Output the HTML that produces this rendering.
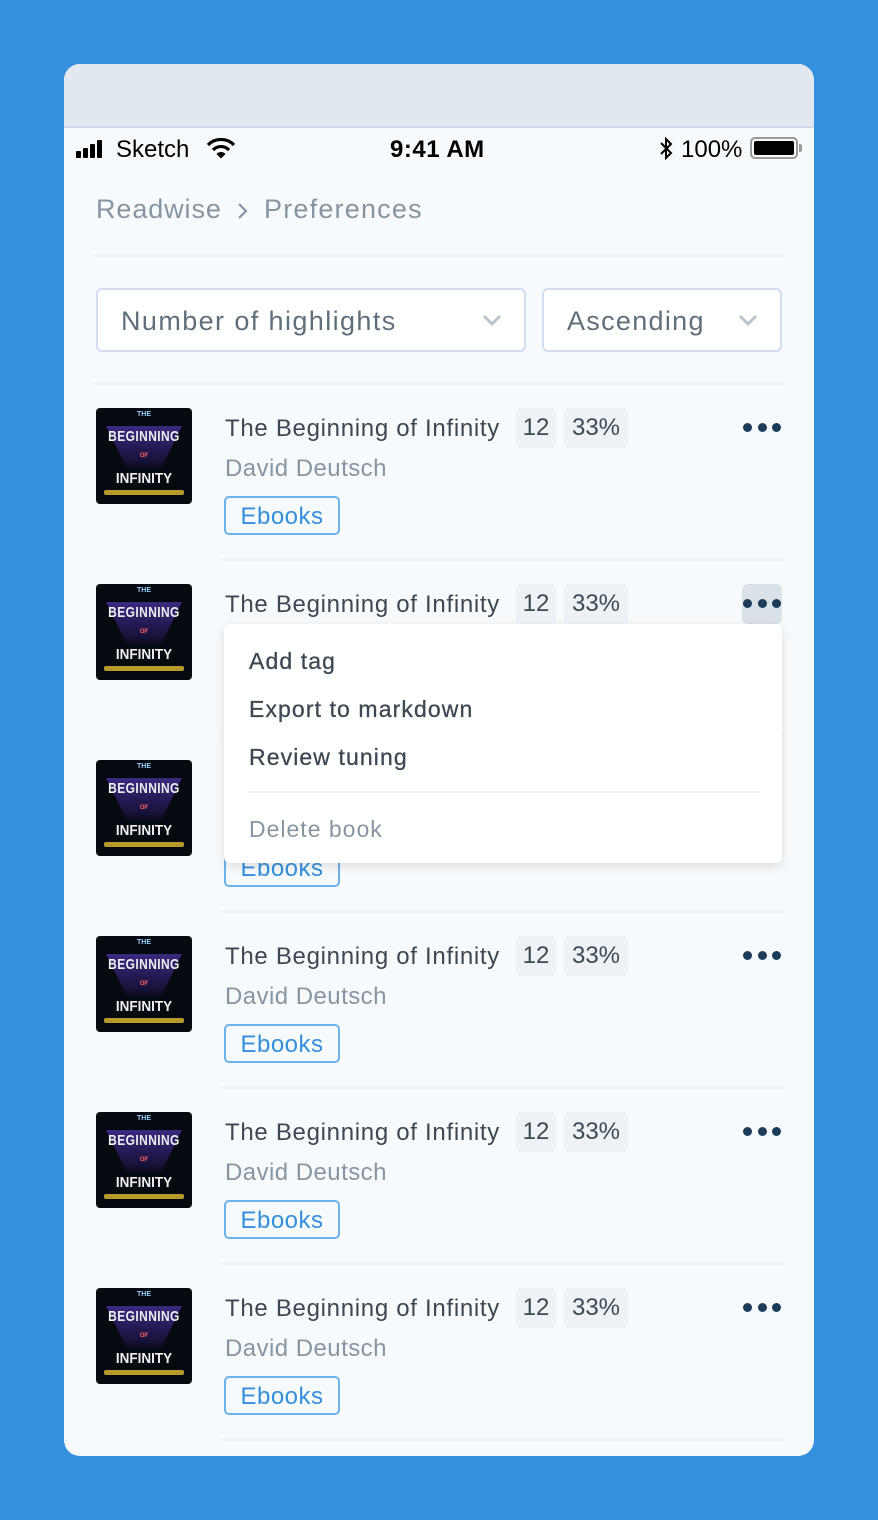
<!DOCTYPE html>
<html><head><meta charset="utf-8"><style>
*{margin:0;padding:0;box-sizing:border-box}
body{width:878px;height:1520px;background:#3490dc;font-family:"Liberation Sans",sans-serif;position:relative;overflow:hidden}
.card{position:absolute;left:64px;top:64px;width:750px;height:1392px;background:#f7fafc;border-radius:16px;overflow:hidden}
.hdr{position:absolute;left:0;top:0;width:750px;height:64px;background:#e2e8f0;border-bottom:2px solid #cfd8e3}
.a{position:absolute;white-space:nowrap}
.hr{position:absolute;height:3px;background:#edf2f7}
.sel{position:absolute;top:224px;height:64px;border:2px solid #d6dcf0;border-radius:6px;background:#fff;font-size:27px;color:#606f7b;padding-left:23px;line-height:62px;letter-spacing:.6px}
.chev{position:absolute;top:22px;width:20px;height:16px}
.cover{position:absolute;left:32px;width:96px;height:96px;background:#050a10;border-radius:4px;overflow:hidden;text-align:center;color:#eee;font-weight:bold}
.cover .g{position:absolute;left:10px;right:10px;top:18px;height:46px;background:linear-gradient(#3a2a80,#1b1440 70%,#050a10);clip-path:polygon(0 0,100% 0,70% 100%,30% 100%)}
.cover .t1{position:absolute;top:3px;width:100%;font-size:7px;color:#9cf}
.cover .t2{position:absolute;top:20px;width:100%;font-size:15px;letter-spacing:0.5px;transform:scaleX(.8)}
.cover .t3{position:absolute;top:45px;width:100%;font-size:6px;color:#f66}
.cover .t4{position:absolute;top:62px;width:100%;font-size:15px;transform:scaleX(.9)}
.cover .y{position:absolute;left:8px;right:8px;top:82px;height:5px;background:#b89a2a;border-radius:2px}
.title{font-size:24px;color:#3d4852;letter-spacing:.7px}
.auth{font-size:24px;color:#8795a1;letter-spacing:.45px}
.badge{position:absolute;height:40px;background:#edf2f7;border-radius:6px;font-size:24px;color:#3d4852;line-height:40px;text-align:center}
.tag{position:absolute;left:160px;width:116px;height:39px;border:2px solid #6cb2eb;border-radius:5px;font-size:24px;color:#3490dc;line-height:37px;text-align:center;letter-spacing:.5px}
.dots{position:absolute;left:678px;width:40px;height:40px;border-radius:6px}
.dots i{position:absolute;top:15px;width:9px;height:9px;border-radius:50%;background:#1c3d5a}
.menu{position:absolute;left:160px;top:560px;width:558px;height:239px;background:#fff;border-radius:6px;box-shadow:0 3px 10px rgba(0,0,0,.12);z-index:5}
.mi{position:absolute;left:25px;font-size:23px;color:#3d4852;letter-spacing:1.1px;-webkit-text-stroke:.3px #3d4852}
</style></head><body>
<div class="card">
<div class="hdr"></div>
<svg class="a" style="left:12px;top:75px" width="34" height="20"><rect x="0" y="12" width="5" height="7" rx="1"/><rect x="7" y="9" width="5" height="10" rx="1"/><rect x="14" y="5" width="5" height="14" rx="1"/><rect x="21" y="1" width="5" height="18" rx="1"/></svg>
<div class="a" style="left:52px;top:72px;font-size:24px;color:#000">Sketch</div>
<svg class="a" style="left:142px;top:73px" width="30" height="22" viewBox="0 0 30 22"><path d="M2 8 A18 18 0 0 1 28 8" stroke="#000" stroke-width="3.2" fill="none"/><path d="M7 13 A11 11 0 0 1 23 13" stroke="#000" stroke-width="3.2" fill="none"/><path d="M10.5 17 L15 21.5 L19.5 17 A6 6 0 0 0 10.5 17Z"/></svg>
<div class="a" style="left:326px;top:72px;font-size:24px;color:#000;font-weight:bold;letter-spacing:.5px">9:41 AM</div>
<svg class="a" style="left:594px;top:72px" width="16" height="26" viewBox="0 0 16 26"><path d="M3 7 L13 17 L8 22 L8 3 L13 8 L3 18" stroke="#000" stroke-width="2" fill="none"/></svg>
<div class="a" style="left:617px;top:72px;font-size:24px;color:#000">100%</div>
<div class="a" style="left:686px;top:73px;width:48px;height:22px;border:2px solid #999;border-radius:5px;padding:2px"><div style="width:100%;height:100%;background:#000;border-radius:2px"></div></div>
<div class="a" style="left:735px;top:80px;width:3px;height:8px;background:#999;border-radius:0 2px 2px 0"></div>
<div class="a" style="left:32px;top:130px;font-size:27px;color:#8795a1;letter-spacing:.9px">Readwise</div>
<svg class="a" style="left:172px;top:137px" width="14" height="20"><path d="M3 3 L10 10 L3 17" stroke="#8795a1" stroke-width="2.2" fill="none"/></svg>
<div class="a" style="left:200px;top:130px;font-size:27px;color:#8795a1;letter-spacing:1.2px">Preferences</div>
<div class="hr" style="left:30px;top:190px;width:690px"></div>
<div class="sel" style="left:32px;width:430px;letter-spacing:1.4px">Number of highlights<svg class="chev" style="left:384px" viewBox="0 0 20 16"><path d="M2 4 L10 12 L18 4" stroke="#b8c2cc" stroke-width="2.8" fill="none"/></svg></div>
<div class="sel" style="left:478px;width:240px;letter-spacing:1.3px">Ascending<svg class="chev" style="left:194px" viewBox="0 0 20 16"><path d="M2 4 L10 12 L18 4" stroke="#b8c2cc" stroke-width="2.8" fill="none"/></svg></div>
<div class="hr" style="left:30px;top:318px;width:690px"></div>
<div id="rows"></div>
<script>
var h='';
for(var i=0;i<6;i++){var y=344+176*i;
h+='<div class="cover" style="top:'+y+'px"><div class="g"></div><div class="t1">THE</div><div class="t2">BEGINNING</div><div class="t3">OF</div><div class="t4">INFINITY</div><div class="y"></div></div>';
h+='<div class="a title" style="left:161px;top:'+(y+7)+'px">The Beginning of Infinity</div>';
h+='<div class="badge" style="left:452px;width:40px;top:'+y+'px">12</div>';
h+='<div class="badge" style="left:500px;width:64px;top:'+y+'px">33%</div>';
h+='<div class="dots" style="top:'+y+'px;'+(i==1?'background:#dae1e7':'')+'"><i style="left:1px"></i><i style="left:15.5px"></i><i style="left:30px"></i></div>';
h+='<div class="a auth" style="left:161px;top:'+(y+47)+'px">David Deutsch</div>';
h+='<div class="tag" style="top:'+(y+88)+'px">Ebooks</div>';
h+='<div class="hr" style="left:158px;width:562px;top:'+(y+150)+'px"></div>';}
document.getElementById('rows').innerHTML=h;
</script>
<div class="menu">
<div class="mi" style="top:24px">Add tag</div>
<div class="mi" style="top:72px">Export to markdown</div>
<div class="mi" style="top:120px">Review tuning</div>
<div style="position:absolute;left:24px;top:167px;width:512px;height:2px;background:#edf2f7"></div>
<div class="mi" style="top:192px;color:#8795a1;-webkit-text-stroke:0;letter-spacing:1px">Delete book</div>
</div>
</div>
</body></html>
